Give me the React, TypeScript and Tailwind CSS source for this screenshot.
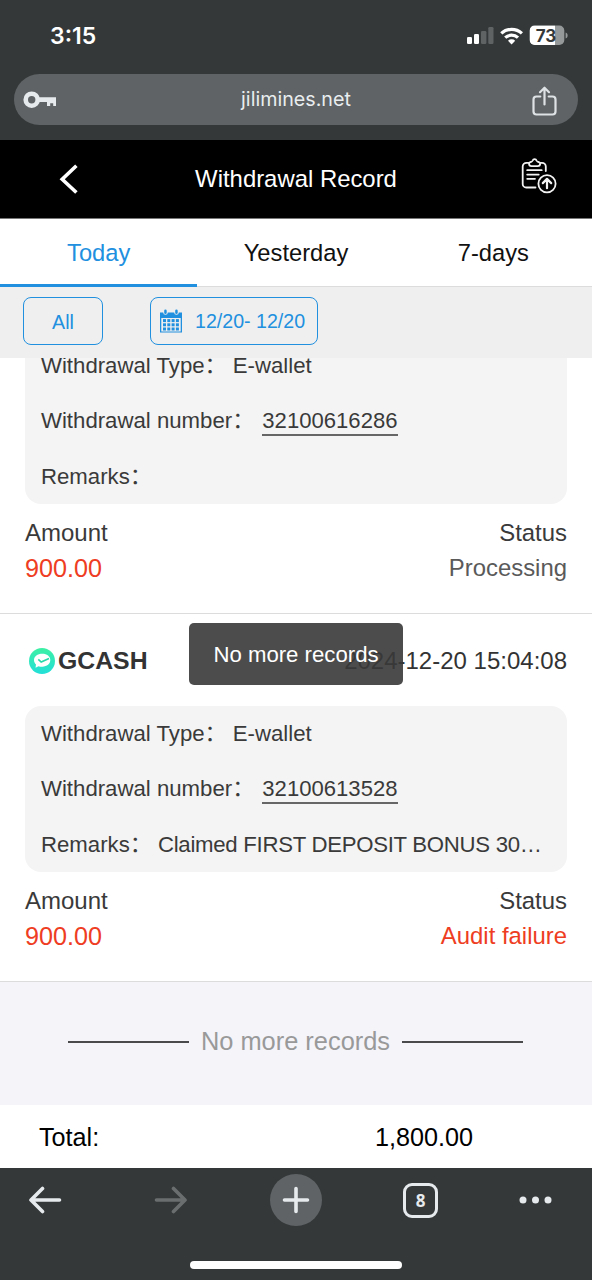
import React from 'react';

type WithdrawalRecord = {
  id: string;
  brand?: string;
  time?: string;
  remarks: string;
  amount: string;
  status: string;
  failed: boolean;
};

const records: WithdrawalRecord[] = [
  { id: '32100616286', remarks: '', amount: '900.00', status: 'Processing', failed: false },
  {
    id: '32100613528',
    brand: 'GCASH',
    time: '2024-12-20 15:04:08',
    remarks: 'Claimed FIRST DEPOSIT BONUS 30…',
    amount: '900.00',
    status: 'Audit failure',
    failed: true,
  },
];

const StatusBar = () => (
  <div className="flex h-[74px] items-center justify-between pl-[50px] pr-[24px] pb-[2px] text-white">
    <span className="font-['Inter',sans-serif] text-[23px] font-semibold leading-none">3:15</span>
    <svg width="102" height="22" viewBox="466 25 102 22">
      <rect x="467" y="37" width="5" height="7" rx="1.3" fill="#fff" />
      <rect x="474" y="34" width="5" height="10" rx="1.3" fill="#fff" />
      <rect x="481" y="31" width="5.4" height="13" rx="1.3" fill="#5f6364" />
      <rect x="488.3" y="27" width="5.2" height="17" rx="1.3" fill="#5f6364" />
      <g fill="none" stroke="#fff" strokeWidth="3.2">
        <path d="M501.3 33.4a15.2 15.2 0 0 1 20.6 0" />
        <path d="M505.2 37.7a9.4 9.4 0 0 1 12.8 0" />
      </g>
      <path d="M508 40.8a5.2 5.2 0 0 1 7.2 0l-3.6 3.6z" fill="#fff" />
      <clipPath id="level">
        <rect x="529.5" y="25.5" width="25.5" height="20" />
      </clipPath>
      <rect x="529.7" y="25.6" width="34.6" height="19.4" rx="5" fill="#96999a" />
      <rect x="529.7" y="25.6" width="34.6" height="19.4" rx="5" fill="#fff" clipPath="url(#level)" />
      <path d="M565.6 32.5c1.6.6 2 1.7 2 3s-.4 2.400-2 3z" fill="#96999a" />
      <text x="546" y="41.500" textAnchor="middle" fontFamily="Inter, sans-serif" fontWeight="700" fontSize="17" fill="#353839">73</text>
    </svg>
  </div>
);

const AddressBar = () => (
  <div className="flex h-[66px] items-start px-[14px]">
    <div className="relative flex h-[51px] w-full items-center justify-between rounded-full bg-[#5f6365] pl-[9px] pr-[21px]">
      <svg width="34" height="18" viewBox="0 0 34 18" className="mt-[1px]">
        <circle cx="8.700" cy="8.700" r="6" fill="none" stroke="#e6eaed" strokeWidth="4.600" />
        <path d="M16 6.300H33V15H30.200V12.300H27.200V15H24V11H16z" fill="#e6eaed" />
      </svg>
      <span className="absolute inset-x-0 text-center font-['Inter',sans-serif] text-[19.700px] text-[#e9edef]">jilimines.net</span>
      <svg width="25" height="30" viewBox="0 0 25 30" fill="none" stroke="#dfe2e4" strokeWidth="2.200" strokeLinecap="round" strokeLinejoin="round" className="mt-[2px]">
        <path d="M8.300 10.500H4.500a3 3 0 0 0-3 3v12a3 3 0 0 0 3 3h16a3 3 0 0 0 3-3v-12a3 3 0 0 0-3-3h-3.800" />
        <path d="M12.500 18.500V2M8 6.200L12.500 1.700L17 6.200" />
      </svg>
    </div>
  </div>
);

const PageHeader = () => (
  <div className="grid h-[79px] grid-cols-[136px_1fr_136px] items-center border-b border-[#777] bg-black text-white">
    <svg width="20" height="30" viewBox="0 0 20 30" fill="none" stroke="#fff" strokeWidth="3.600" className="ml-[59px]">
      <path d="M17.400 1.800L3.200 15.300L17.400 28.500" />
    </svg>
    <h1 className="text-center text-[23.900px] leading-none">Withdrawal Record</h1>
    <svg width="36" height="36" viewBox="0 0 36 36" fill="none" stroke="#f2f2f2" strokeWidth="1.800" strokeLinecap="round" strokeLinejoin="round" className="mb-[6px] ml-[65px]">
      <path d="M7.500 4.800H5.500a3.800 3.800 0 0 0-3.800 3.800V26a3.500 3.500 0 0 0 3.500 3.500H14.500M19.500 4.800h1.500a3.800 3.800 0 0 1 3.800 3.800V13" />
      <path d="M8 5.600c0-1 .900-1.400 1.800-1.600c1-.200 1.500-.600 1.900-1.500c.600-1.900 3.200-1.900 3.800 0c.400.900.900 1.300 1.900 1.500c.900.200 1.800.600 1.800 1.600c0 1.500-1 2.600-2.500 2.600h-6.200c-1.500 0-2.500-1.100-2.500-2.600z" />
      <path d="M6.200 12.200h14.500M6.200 16.600h11.500M6.200 20.800h7.800" />
      <circle cx="26" cy="25.700" r="8.600" />
      <path d="M26 30.200V21M21.800 25.100L26 20.900L30.200 25.100" strokeWidth="2.200" />
    </svg>
  </div>
);

const Tabs = () => (
  <div className="grid h-[68px] grid-cols-3 border-b border-[#dcdcdc] bg-white text-center text-[23.700px] leading-[69px] text-[#111]">
    <div className="z-10 h-[68px] border-b-[3px] border-[#2190df] text-[#2190df]">Today</div>
    <div className="h-[67px]">Yesterday</div>
    <div className="h-[67px]">7-days</div>
  </div>
);

const CalendarIcon = () => (
  <svg width="22" height="24" viewBox="0 0 22 24" fill="#2190df">
    <path d="M0 3.500h3.200a2.300 2.300 0 0 0 4.600 0h6.400a2.300 2.300 0 0 0 4.600 0H22V23.500H0z" />
    <rect x="4.200" y="0.500" width="2.500" height="4.500" rx="1.250" />
    <rect x="15.200" y="0.500" width="2.500" height="4.500" rx="1.250" />
    <rect x="1.300" y="9" width="19.400" height="13.500" fill="#efefef" />
    {[10.1, 14.3, 18.5].map((y) =>
      [3, 7.3, 11.6, 15.9].map((x) => <rect key={`${x}-${y}`} x={x} y={y} width="3" height="3" />)
    )}
  </svg>
);

const Filters = () => (
  <div className="flex h-[71px] items-start bg-[#efefef] px-[23px] pt-[10px] text-[19.600px] text-[#2190df]">
    <button className="h-[48px] w-[80px] rounded-[8px] border border-[#2190df] pt-[3px]">All</button>
    <button className="ml-[47px] flex h-[48px] w-[168px] items-center rounded-[8px] border border-[#2190df] pl-[9px]">
      <CalendarIcon />
      <span className="ml-[13px] mt-[2px] whitespace-nowrap">12/20- 12/20</span>
    </button>
  </div>
);

const GcashLogo = () => (
  <svg width="26" height="26" viewBox="0 0 26 26">
    <defs>
      <linearGradient id="gcash" x1="0" y1="0" x2="0" y2="1">
        <stop offset="0" stopColor="#3df0a4" />
        <stop offset="1" stopColor="#22dfd8" />
      </linearGradient>
    </defs>
    <circle cx="13" cy="13" r="13" fill="url(#gcash)" />
    <path d="M13.300 5.800c4.700 0 8 2.500 8 6.300s-3.300 6.600-8 6.600c-1.600 0-2.600 0-3.800-.500L6.500 19.800l.500-3.400C5.600 15.300 5 13.800 5 12.100c0-3.800 3.500-6.300 8.300-6.300z" fill="#fff" />
    <path d="M9.300 11.300l2.900 2.700l7.800-3.600" fill="none" stroke="#25d9a8" strokeWidth="1.600" />
  </svg>
);

const RecordItem = ({ record }: { record: WithdrawalRecord }) => (
  <div className="shrink-0 border-b border-[#dcdcdc] bg-white px-[25px]">
    {record.brand && (
      <div className="flex h-[92px] items-center justify-between pl-[4px] pt-[2px] text-[#333]">
        <div className="flex items-center gap-[3px]">
          <GcashLogo />
          <span className="text-[24.800px] font-bold leading-none">{record.brand}</span>
        </div>
        <span className="text-[24px] leading-none">{record.time}</span>
      </div>
    )}
    <div className="flex h-[166px] flex-col rounded-[16px] bg-[#f4f4f4] pl-[16px] text-[22.200px] leading-[55.400px] text-[#3a3a3a]">
      <div className="flex h-[55.400px] whitespace-nowrap">
        <span>Withdrawal Type：</span>
        <span className="ml-[6px]">E-wallet</span>
      </div>
      <div className="flex h-[55.400px] items-center whitespace-nowrap">
        <span>Withdrawal number：</span>
        <span className="ml-[8px] mt-[1px] border-b-2 border-[#666] text-[22.100px] leading-[26px]">{record.id}</span>
      </div>
      <div className="flex h-[55.400px] whitespace-nowrap">
        <span>Remarks：</span>
        <span className="ml-[6px] tracking-[-0.280px]">{record.remarks}</span>
      </div>
    </div>
    <div className="flex h-[109px] justify-between pt-[11px] text-[24px] leading-[35.500px] text-[#3a3a3a]">
      <div>
        <div>Amount</div>
        <div className="text-[25.200px] text-[#ee3d22]">{record.amount}</div>
      </div>
      <div className="text-right text-[23.900px]">
        <div>Status</div>
        <div className={record.failed ? '-mt-[1px] text-[#ee3d22]' : '-mt-[1px] text-[#5a5a5a]'}>{record.status}</div>
      </div>
    </div>
  </div>
);

const BrowserToolbar = () => (
  <div className="flex h-[112px] flex-col items-center bg-[#353839]">
    <div className="mt-[6px] flex h-[52px] w-full items-center pl-[29px] pr-[40px]">
      <svg width="33" height="28" viewBox="0 0 33 28" fill="none" stroke="#e6eaed" strokeWidth="3.600" strokeLinecap="round" strokeLinejoin="round">
        <path d="M30.500 14H2.500M13.500 2.500L2 14L13.500 25.500" />
      </svg>
      <svg width="33" height="28" viewBox="0 0 33 28" fill="none" stroke="#6b6e6f" strokeWidth="3.600" strokeLinecap="round" strokeLinejoin="round" className="ml-[92px]">
        <path d="M2.500 14H30.500M19.500 2.500L31 14L19.500 25.500" />
      </svg>
      <div className="ml-[83px] flex size-[52px] items-center justify-center rounded-full bg-[#5f6365]">
        <svg width="28" height="28" viewBox="0 0 28 28" stroke="#e6eaed" strokeWidth="3.600" strokeLinecap="round">
          <path d="M2.500 14H25.500M14 2.500V25.500" />
        </svg>
      </div>
      <div className="ml-[81px] flex size-[35px] items-center justify-center rounded-[9px] border-[3px] border-[#e6eaed] pt-[1px] font-['Open_Sans',sans-serif] text-[17px] font-bold leading-none text-[#e6eaed]">
        8
      </div>
      <svg width="33" height="8" viewBox="0 0 33 8" fill="#e6eaed" className="ml-auto">
        <circle cx="4" cy="4" r="3.500" />
        <circle cx="16.500" cy="4" r="3.500" />
        <circle cx="29" cy="4" r="3.500" />
      </svg>
    </div>
    <div className="mt-[35px] h-[8px] w-[212px] rounded-full bg-white" />
  </div>
);

export default function App() {
  return (
    <div className="relative flex h-[1280px] w-[592px] flex-col overflow-hidden bg-[#353839] font-['Liberation_Sans','Noto_Sans_CJK_SC',sans-serif]">
      <StatusBar />
      <AddressBar />
      <PageHeader />
      <Tabs />
      <Filters />

      {/* scrolled to the end, so the older entries slide under the filter bar */}
      <div className="flex h-[747px] flex-col justify-end overflow-hidden bg-white">
        {records.map((record) => (
          <RecordItem key={record.id} record={record} />
        ))}
        <div className="flex h-[123px] shrink-0 items-center justify-center gap-[12px] bg-[#f4f4f9] pb-[4px] pr-[1px] text-[25.400px] text-[#999]">
          <span className="h-[2px] w-[121px] bg-[#4a4a4c]" />
          <span className="whitespace-nowrap">No more records</span>
          <span className="h-[2px] w-[121px] bg-[#4a4a4c]" />
        </div>
      </div>

      <div className="grid h-[63px] grid-cols-[375px_1fr] items-center bg-white pt-[2px] text-[25.200px] text-black">
        <span className="pl-[39px]">Total:</span>
        <span>1,800.00</span>
      </div>
      <BrowserToolbar />

      <div className="absolute left-[189px] top-[623px] flex h-[62px] w-[214px] items-center justify-center rounded-[5px] bg-[#383838]/90 pt-[2px] text-[22.200px] text-white">
        No more records
      </div>
    </div>
  );
}
